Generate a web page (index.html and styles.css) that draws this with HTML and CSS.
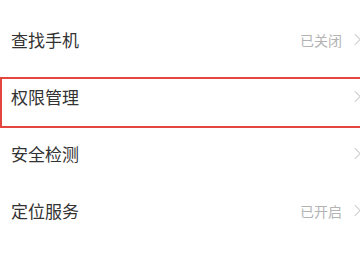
FILE: index.html
```
<!DOCTYPE html>
<html lang="zh-CN">
<head>
    <meta charset="UTF-8">
    <meta name="viewport" content="width=device-width, initial-scale=1.0">
    <title>设置</title>
    <link rel="stylesheet" href="styles.css">
</head>
<body>
    <div class="settings-list">
        <div class="setting-row">
            <span class="setting-name">查找手机</span>
            <span class="setting-value">已关闭</span>
            <svg class="chevron" viewBox="0 0 8 14"><path d="M1 1 L7 7 L1 13" /></svg>
        </div>
        <div class="setting-row highlighted">
            <span class="setting-name">权限管理</span>
            <svg class="chevron" viewBox="0 0 8 14"><path d="M1 1 L7 7 L1 13" /></svg>
        </div>
        <div class="setting-row">
            <span class="setting-name">安全检测</span>
            <svg class="chevron" viewBox="0 0 8 14"><path d="M1 1 L7 7 L1 13" /></svg>
        </div>
        <div class="setting-row">
            <span class="setting-name">定位服务</span>
            <span class="setting-value">已开启</span>
            <svg class="chevron" viewBox="0 0 8 14"><path d="M1 1 L7 7 L1 13" /></svg>
        </div>
    </div>
</body>
</html>
```

FILE: styles.css
```
body {
    margin: 0;
    padding: 0;
    background-color: #ffffff;
    font-family: "Noto Sans CJK SC", "Noto Sans", sans-serif;
    overflow: hidden;
    width: 360px;
    height: 270px;
}
.settings-list {
    width: 372px;
    padding-top: 11px;
}
.setting-row {
    height: 57px;
    display: flex;
    align-items: center;
    padding: 0 11px 0 11px;
    position: relative;
}
.setting-name {
    flex: 1;
    font-size: 17px;
    color: #333333;
}
.setting-value {
    font-size: 14px;
    color: #b3b3b3;
    margin-right: 12px;
}
.chevron {
    width: 7px;
    height: 13px;
    fill: none;
    stroke: #c4c4c4;
    stroke-width: 1.2;
}
.highlighted::after {
    content: "";
    position: absolute;
    left: 0;
    right: 0;
    top: 9px;
    bottom: -3px;
    border: 2px solid #e4463e;
}
```
